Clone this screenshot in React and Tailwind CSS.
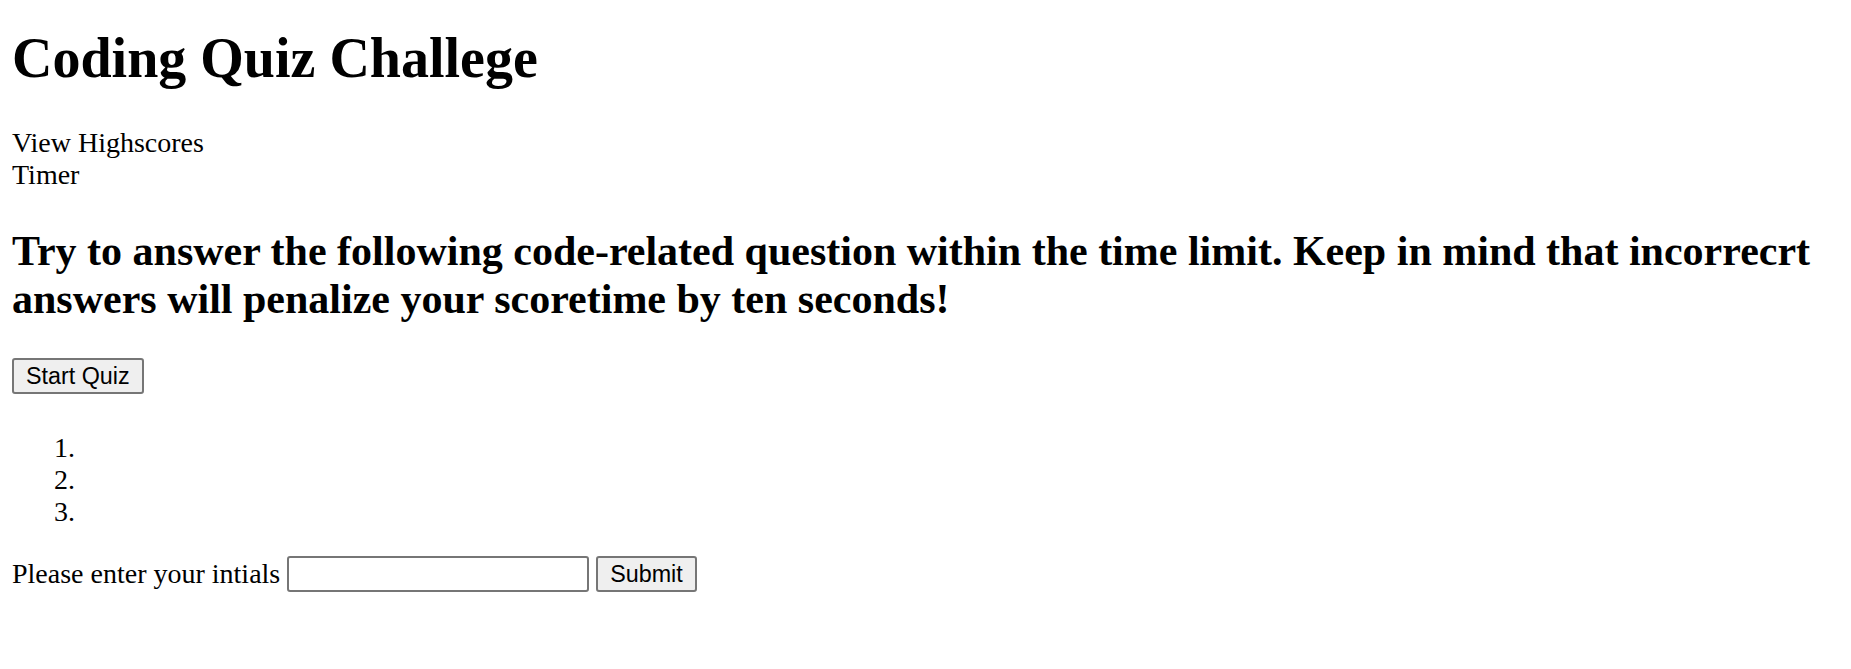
import { useState } from "react";

const App = () => {
  const [initials, setInitials] = useState("");

  return (
    <div className="min-h-screen bg-white px-[12px] pt-[26px] font-['Liberation_Serif',serif] text-[28px] leading-[normal] text-black">
      <h1 className="text-[56px] font-bold mb-[37px]">Coding Quiz Challege</h1>

      <div>View Highscores</div>
      <div>Timer</div>

      <h2 className="text-[42px] font-bold mt-[36px] mb-[35px]">
        Try to answer the following code-related question within the time limit. Keep in mind that incorrecrt answers will penalize your scoretime by ten seconds!
      </h2>

      <div className="flex">
        <button
          type="button"
          className="h-[36px] px-[12px] bg-[#efefef] border-2 border-[#767676] rounded-[3px] font-['Liberation_Sans',sans-serif] text-[23.3px] leading-[normal] text-black"
        >
          Start Quiz
        </button>
      </div>

      <ol className="list-decimal pl-[70px] mt-[38px] mb-[28px]">
        <li></li>
        <li></li>
        <li></li>
      </ol>

      <div className="flex items-center gap-[7px] h-[36px]">
        <span>Please enter your intials</span>
        <input
          type="text"
          value={initials}
          onChange={(e) => setInitials(e.target.value)}
          className="w-[302px] h-[36px] px-[4px] bg-white border-2 border-[#767676] rounded-[3px] font-['Liberation_Sans',sans-serif] text-[23.3px] outline-none"
        />
        <button
          type="button"
          className="h-[36px] px-[12px] bg-[#efefef] border-2 border-[#767676] rounded-[3px] font-['Liberation_Sans',sans-serif] text-[23.3px] leading-[normal] text-black"
        >
          Submit
        </button>
      </div>
    </div>
  );
};

export default App;
